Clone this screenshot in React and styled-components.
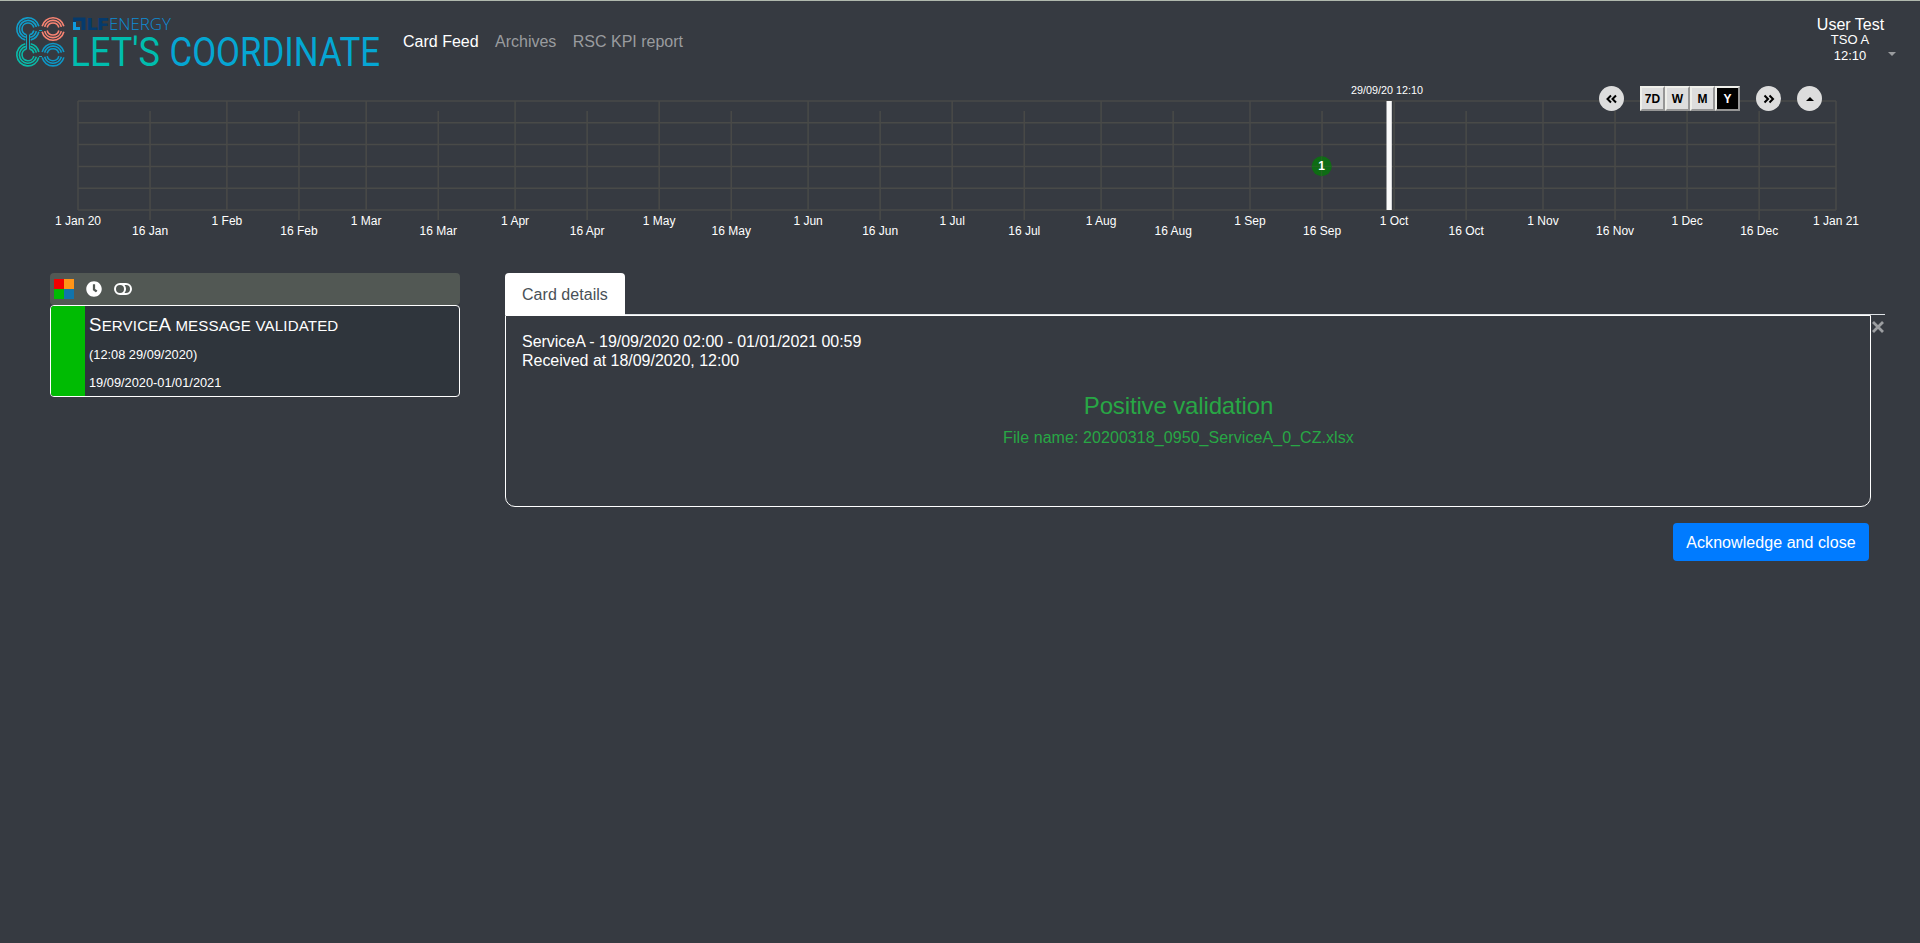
import React from "react";
import styled, { createGlobalStyle } from "styled-components";

const GlobalStyle = createGlobalStyle`
  *, *::before, *::after { box-sizing: border-box; }
  body {
    margin: 0;
    background: #363a41;
    color: #fff;
    font: 16px/1.5 "Liberation Sans", Arial, sans-serif;
  }
`;

const Page = styled.div`
  min-height: 943px;
  border-top: 1px solid #b0b8ad;
`;

const NavBar = styled.header`
  display: flex;
  align-items: flex-start;
  height: 80px;
  padding: 0 24px 0 14px;
`;

const LogoSvg = styled.svg`
  display: block;
  width: 373px;
  height: 80px;
  margin-right: 8px;
  overflow: visible;
`;

const NavLinks = styled.nav`
  display: flex;
  gap: 16.4px;
  flex: 1;
  padding: 29px 0 0 8px;
`;

const NavLink = styled.a`
  line-height: 24px;
  white-space: nowrap;
  color: ${(p) => (p.$active ? "#fff" : "#9a9c9f")};
`;

const UserMenu = styled.div`
  display: flex;
  align-items: flex-end;
  margin-top: 12px;
`;

const UserInfo = styled.div`
  display: flex;
  flex-direction: column;
  align-items: center;
  width: 76px;
  font-size: 13px;
  line-height: 16px;
`;

const UserName = styled.span`
  font-size: 16px;
  line-height: 24px;
  margin-bottom: -5px;
  padding-left: 1px;
`;

const Caret = styled.span`
  margin-bottom: 8px;
  border: 4px solid transparent;
  border-top-color: #9a9c9f;
  border-bottom: 0;
`;

const TimelineSection = styled.section`
  position: relative;
  height: 192px;
`;

const ChartSvg = styled.svg`
  display: block;
  width: 1920px;
  height: 170px;
  font-family: "Liberation Sans", Arial, sans-serif;
`;

const Controls = styled.div`
  position: absolute;
  top: 5px;
  right: 98px;
  display: flex;
  gap: 16px;
`;

const RoundButton = styled.button`
  display: flex;
  align-items: center;
  justify-content: center;
  width: 25px;
  height: 25px;
  padding: 0;
  border: 0;
  border-radius: 50%;
  background: #ddd;
`;

const RangeGroup = styled.div`
  display: flex;
`;

const RangeButton = styled.button`
  width: 25px;
  height: 25px;
  padding: 0;
  border: 2px solid;
  border-color: #efefea #969696 #969696 #efefea;
  background: ${(p) => (p.$active ? "#000" : "#ddd")};
  color: ${(p) => (p.$active ? "#fff" : "#000")};
  font: bold 12px/20px "Liberation Sans", Arial, sans-serif;
`;

const Main = styled.main`
  display: flex;
  align-items: flex-start;
  gap: 45px;
  padding: 0 35px 0 50px;
`;

const Feed = styled.aside`
  width: 410px;
`;

const FilterBar = styled.div`
  display: flex;
  align-items: center;
  height: 32px;
  padding-left: 4px;
  border-radius: 4px;
  background: #525854;
`;

const SeverityGrid = styled.div`
  display: grid;
  grid-template-columns: 10px 10px;
  grid-auto-rows: 10px;
  margin-right: 12px;
`;

const Severity = styled.span`
  background: ${(p) => p.$color};
`;

const FilterIcon = styled.svg`
  display: block;
  margin-right: ${(p) => p.$gap || 0}px;
  fill: #fff;
`;

const FeedCard = styled.article`
  display: flex;
  height: 92px;
  overflow: hidden;
  border: 1px solid #fff;
  border-radius: 4px;
  background: #2f353c;
`;

const CardStripe = styled.div`
  width: 34px;
  background: #00bb03;
`;

const CardBody = styled.div`
  padding: 8px 0 0 4px;
  font-size: 12.8px;
`;

const CardTitle = styled.h2`
  margin: 0 0 8px;
  font-size: 18.7px;
  font-weight: 400;
  line-height: 22px;
  letter-spacing: 0.15px;
`;

const SmallCaps = styled.span`
  font-size: 15.1px;
  text-transform: uppercase;
`;

const CardLine = styled.p`
  margin: 0 0 8px;
  line-height: 20px;
`;

const Details = styled.section`
  width: 1380px;
`;

const Tabs = styled.div`
  display: flex;
  border-bottom: 1px solid #dee2e6;
`;

const Tab = styled.div`
  width: 120px;
  height: 42px;
  margin-bottom: -1px;
  padding: 10px 17px 8px;
  border-radius: 4px 4px 0 0;
  background: #fff;
  color: #495057;
  letter-spacing: 0.04px;
`;

const DetailRow = styled.div`
  display: flex;
  align-items: flex-start;
`;

const DetailPanel = styled.div`
  width: 1366px;
  height: 192px;
  padding: 16px 16px;
  border: 1px solid #fff;
  border-radius: 0 0 10px 10px;
  line-height: 19px;
  letter-spacing: -0.03px;
`;

const Validation = styled.div`
  padding: 21px 19px 0 0;
  text-align: center;
  color: #28a745;
`;

const ValidationTitle = styled.h3`
  margin: 0 0 8px;
  font-size: 24px;
  font-weight: 400;
  line-height: 29px;
  letter-spacing: -0.14px;
`;

const FileName = styled.div`
  line-height: 19px;
  letter-spacing: 0.07px;
`;

const CloseSvg = styled.svg`
  display: block;
  margin: 6px 0 0 1px;
`;

const Actions = styled.div`
  display: flex;
  justify-content: flex-end;
  padding: 16px 16px 0 0;
`;

const PrimaryButton = styled.button`
  width: 196px;
  height: 38px;
  padding: 2px 0 0;
  border: 0;
  border-radius: 4px;
  background: #007bff;
  color: #fff;
  font: 16px/24px "Liberation Sans", Arial, sans-serif;
  letter-spacing: 0.06px;
`;

const RING_RADII = [6, 8.6, 11.2];
const rad = (deg) => (deg * Math.PI) / 180;

function Rings({ cx, cy, color, arcs }) {
  return (
    <g fill="none" stroke={color} strokeWidth="1.6">
      {RING_RADII.map((r) =>
        arcs.map(([from, to]) => {
          const x1 = cx + r * Math.cos(rad(from));
          const y1 = cy + r * Math.sin(rad(from));
          const x2 = cx + r * Math.cos(rad(to));
          const y2 = cy + r * Math.sin(rad(to));
          const large = to - from > 180 ? 1 : 0;
          return <path key={`${r}-${from}`} d={`M${x1} ${y1}A${r} ${r} 0 ${large} 1 ${x2} ${y2}`} />;
        })
      )}
    </g>
  );
}

function Logo() {
  return (
    <LogoSvg viewBox="14 1 373 80">
      <Rings cx={28} cy={29} color="#119dca" arcs={[[104, 346], [14, 76]]} />
      <Rings cx={53} cy={29} color="#f98473" arcs={[[194, 346], [14, 166]]} />
      <Rings cx={28} cy={54.7} color="#0abaa8" arcs={[[14, 256], [284, 346]]} />
      <Rings cx={53} cy={54.7} color="#0d98c8" arcs={[[194, 346], [14, 166]]} />
      <g stroke="#16a6bd" strokeWidth="1">
        <path d="M26.500 35v14M29.500 35v14" />
        <path d="M39 56.500h3M39 30.500h3" />
      </g>
      <path d="M73 17.500h12.500v12.500h-4v-9h-5.500v2h-3z" fill="#053a6d" />
      <path d="M73 22h3v5h4v3h-7z" fill="#0e9be0" />
      <text x="87" y="30" fontFamily="Inter, sans-serif" fontWeight="900" fontSize="16.5" fill="#053a6d" textLength="21.5" lengthAdjust="spacingAndGlyphs">LF</text>
      <text x="109" y="30" fontFamily="'Open Sans', sans-serif" fontWeight="300" fontSize="17" fill="#0d8cd6" textLength="62" lengthAdjust="spacingAndGlyphs">ENERGY</text>
      <text x="70.5" y="66" fontFamily="Roboto, sans-serif" fontSize="40" fill="#00bdae" textLength="89.5" lengthAdjust="spacingAndGlyphs">LET'S</text>
      <text x="169.500" y="66" fontFamily="Roboto, sans-serif" fontSize="40" fill="#05a6d3" textLength="210.500" lengthAdjust="spacingAndGlyphs">COORDINATE</text>
    </LogoSvg>
  );
}

const MONTHS = [
  ["Jan", 31], ["Feb", 29], ["Mar", 31], ["Apr", 30], ["May", 31], ["Jun", 30],
  ["Jul", 31], ["Aug", 31], ["Sep", 30], ["Oct", 31], ["Nov", 30], ["Dec", 31],
];

const LEFT = 78;
const WIDTH = 1758;
const dayX = (day) => LEFT + (day * WIDTH) / 366;

const ticks = [];
MONTHS.reduce((day, [name, length]) => {
  ticks.push({ day, label: day === 0 ? "1 Jan 20" : `1 ${name}`, minor: false });
  ticks.push({ day: day + 15, label: `16 ${name}`, minor: true });
  return day + length;
}, 0);
ticks.push({ day: 366, label: "1 Jan 21", minor: false });

function TimelineChart() {
  return (
    <ChartSvg viewBox="0 81 1920 170">
      <g stroke="#494a48" strokeWidth="1.5">
        {[0, 1, 2, 3, 4, 5].map((i) => (
          <line key={i} x1={LEFT} x2={LEFT + WIDTH} y1={101 + i * 21.8} y2={101 + i * 21.8} />
        ))}
        {ticks.map((t) => (
          <line key={t.day} x1={dayX(t.day)} x2={dayX(t.day)} y1={t.minor ? 111 : 101} y2={t.minor ? 220 : 210} />
        ))}
      </g>
      <g fill="#fff" fontSize="12" textAnchor="middle">
        {ticks.map((t) => (
          <text key={t.day} x={dayX(t.day)} y={t.minor ? 235 : 225}>{t.label}</text>
        ))}
      </g>
      <circle cx="1321.7" cy="166.3" r="10" fill="#0e6c14" />
      <path d="M1311.7 166.3h20M1321.7 156.3v20" stroke="#2a6428" strokeWidth="1" />
      <text x="1321.7" y="170" fill="#fff" fontSize="12" fontWeight="bold" textAnchor="middle">1</text>
      <rect x="1386.500" y="101" width="5.300" height="109" fill="#fafafa" />
      <text x="1351" y="94" fill="#fff" fontSize="11" textLength="72" lengthAdjust="spacingAndGlyphs">29/09/20 12:10</text>
    </ChartSvg>
  );
}

function DoubleChevron({ flip }) {
  return (
    <svg width="12" height="10" viewBox="0 0 12 10" fill="none" stroke="#000" strokeWidth="2">
      <path d={flip ? "M1.5 1.5L5 5 1.5 8.5M6.5 1.5L10 5 6.5 8.5" : "M5 1.5L1.5 5 5 8.5M10 1.5L6.5 5l3.500 3.500"} />
    </svg>
  );
}

export default function App() {
  return (
    <Page>
      <GlobalStyle />
      <NavBar>
        <Logo />
        <NavLinks>
          <NavLink $active>Card Feed</NavLink>
          <NavLink>Archives</NavLink>
          <NavLink>RSC KPI report</NavLink>
        </NavLinks>
        <UserMenu>
          <UserInfo>
            <UserName>User Test</UserName>
            <span>TSO A</span>
            <span>12:10</span>
          </UserInfo>
          <Caret />
        </UserMenu>
      </NavBar>
      <TimelineSection>
        <TimelineChart />
        <Controls>
          <RoundButton><DoubleChevron /></RoundButton>
          <RangeGroup>
            <RangeButton>7D</RangeButton>
            <RangeButton>W</RangeButton>
            <RangeButton>M</RangeButton>
            <RangeButton $active>Y</RangeButton>
          </RangeGroup>
          <RoundButton><DoubleChevron flip /></RoundButton>
          <RoundButton>
            <svg width="8" height="5" viewBox="0 0 8 5"><path d="M0 5l4-4 4 4z" /></svg>
          </RoundButton>
        </Controls>
      </TimelineSection>
      <Main>
        <Feed>
          <FilterBar>
            <SeverityGrid>
              <Severity $color="#f00000" />
              <Severity $color="#ff9417" />
              <Severity $color="#00bb03" />
              <Severity $color="#1074ad" />
            </SeverityGrid>
            <FilterIcon width="16" height="16" viewBox="0 0 512 512" $gap={12}>
              <path d="M256 8C119 8 8 119 8 256s111 248 248 248 248-111 248-248S393 8 256 8zm57.100 350.100L224.900 294c-3.100-2.300-4.900-5.900-4.900-9.700V116c0-6.600 5.400-12 12-12h48c6.600 0 12 5.400 12 12v137.700l63.500 46.200c5.400 3.900 6.500 11.400 2.600 16.800l-28.200 38.800c-3.900 5.300-11.400 6.500-16.800 2.600z" />
            </FilterIcon>
            <FilterIcon width="18" height="12" viewBox="0 0 18 12">
              <path fillRule="evenodd" d="M6 0h6a6 6 0 0 1 0 12H6A6 6 0 0 1 6 0zm0 2a4 4 0 1 0 0 8 4 4 0 0 0 0-8zm4.500 0a6 6 0 0 1 0 8H12a4 4 0 0 0 0-8z" />
            </FilterIcon>
          </FilterBar>
          <FeedCard>
            <CardStripe />
            <CardBody>
              <CardTitle>
                S<SmallCaps>ervice</SmallCaps>A <SmallCaps>message validated</SmallCaps>
              </CardTitle>
              <CardLine>(12:08 29/09/2020)</CardLine>
              <CardLine>19/09/2020-01/01/2021</CardLine>
            </CardBody>
          </FeedCard>
        </Feed>
        <Details>
          <Tabs><Tab>Card details</Tab></Tabs>
          <DetailRow>
            <DetailPanel>
              <div>ServiceA - 19/09/2020 02:00 - 01/01/2021 00:59</div>
              <div>Received at 18/09/2020, 12:00</div>
              <Validation>
                <ValidationTitle>Positive validation</ValidationTitle>
                <FileName>File name: 20200318_0950_ServiceA_0_CZ.xlsx</FileName>
              </Validation>
            </DetailPanel>
            <CloseSvg width="12" height="12" viewBox="0 0 12 12">
              <path d="M1 1l10 10M11 1L1 11" stroke="#9c9ea1" strokeWidth="2.800" />
            </CloseSvg>
          </DetailRow>
          <Actions><PrimaryButton>Acknowledge and close</PrimaryButton></Actions>
        </Details>
      </Main>
    </Page>
  );
}
